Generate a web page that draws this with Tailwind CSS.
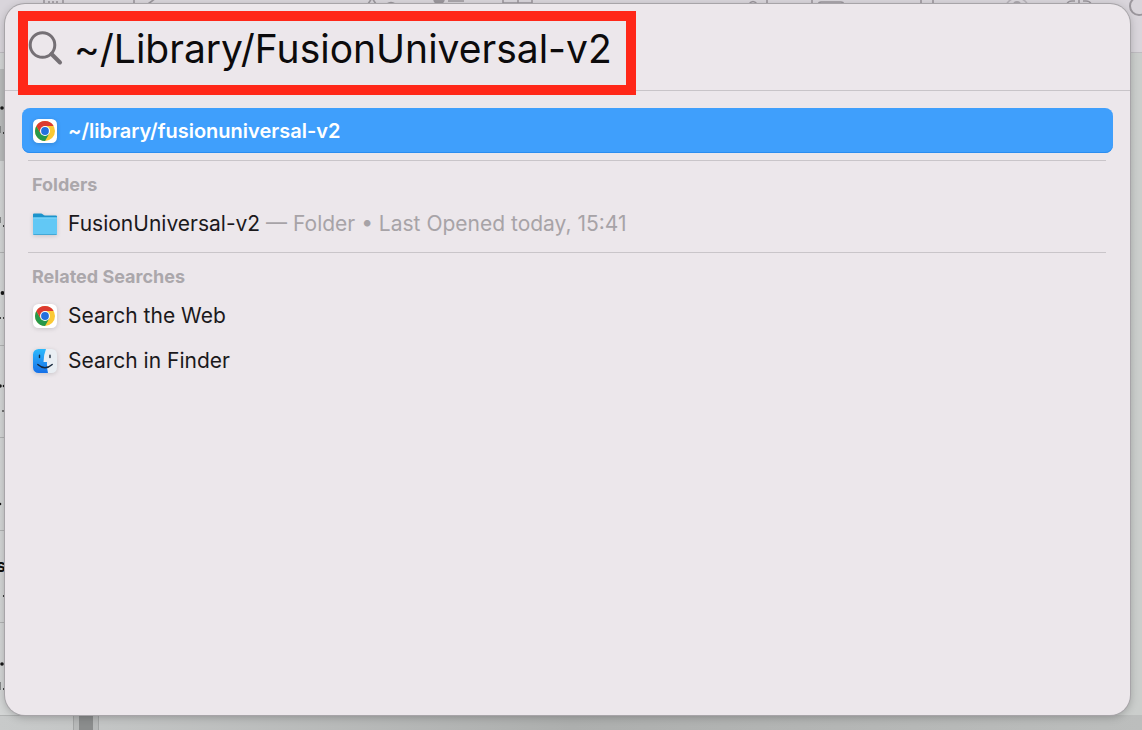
<!DOCTYPE html>
<html lang="en">
<head>
<meta charset="utf-8">
<meta name="viewport" content="width=device-width, initial-scale=1">
<title>Spotlight</title>
<script src="https://cdn.jsdelivr.net/npm/@tailwindcss/browser@4"></script>
</head>
<body class="relative flex h-screen flex-col overflow-hidden bg-[#cccece] font-[Inter,sans-serif] text-[#1b191b]">
<svg class="absolute size-0" aria-hidden="true">
  <defs>
    <symbol id="chrome" viewBox="0 0 24 24">
      <rect width="24" height="24" rx="5.5" fill="#fff"/>
      <circle cx="12" cy="12" r="10" fill="#fbc934"/>
      <path d="M3.34 7A10 10 0 0 0 12 22L16.33 14.5 12 12 7.67 14.5Z" fill="#26984a"/>
      <path d="M3.34 7 7.67 14.5 12 7H20.66A10 10 0 0 0 3.34 7Z" fill="#dc3a30"/>
      <circle cx="12" cy="12" r="5" fill="#fff"/>
      <circle cx="12" cy="12" r="3.9" fill="#2470dc"/>
    </symbol>
  </defs>
</svg>

<!-- Application window behind the search panel -->
<div class="absolute inset-0 flex flex-col" aria-hidden="true">
  <div class="h-[53px] shrink-0 border-b border-[#bfbcc1] bg-[#d9d5db]"></div>
  <div class="relative flex-1 bg-gradient-to-r from-[#d3d5d5] to-[#cbcecc]">
    <div class="absolute left-0 top-4 h-[92px] w-3 bg-[#b9bbbb]"></div>
  </div>
  <div class="flex h-[15px] shrink-0 bg-gradient-to-r from-[#c8caca] via-[#adafae] to-[#bcbebd]">
    <div class="ml-[73px] flex w-[26px] justify-center border-x border-[#a2a4a4] bg-[#b7b9b9]"><div class="w-[14px] bg-[#8b8d8d]"></div></div>
  </div>
</div>
<svg class="absolute left-0 top-0 h-[730px] w-[1142px]" viewBox="0 0 1142 730" fill="none" stroke="#9b979d" stroke-width="1.6" aria-hidden="true">
  <path d="M44-4V4H63V-4M49 1v2M53 1v2M57 1v2M134-4V4M148 4l8-6M368 4l4-6 4 6M387 4q4-3 8 0M448 1h16M503-4V3H532V-4M518-4V3M749 4q4-5 8 0M767-4V4M812-4V4M818 4q1-2 3-2h20q2 0 3 2M921-4V4M933-4V4M1067 4q1-3 5-3h3M1079-4V4M1083 1h3q4 0 5 3"/>
  <circle cx="439" cy="-1" r="5" fill="#9b979d"/>
  <circle cx="1017" cy="10" r="12" stroke="#b8b4ba"/>
  <circle cx="1017" cy="5" r="4" fill="#aca8ae" stroke="none"/>
  <circle cx="1139" cy="6" r="9" stroke-width="2"/>
  <path stroke="#b1b3b3" stroke-width="1" d="M0 252.500h12M0 345.500h12M0 437.500h12M0 530.500h12M0 622.500h12M0 715.500h73"/>
  <g fill="#171717" stroke="none">
    <circle cx="2" cy="108" r="1.800"/><circle cx="4" cy="133" r="1"/><circle cx="4" cy="226" r="1"/><circle cx="2.500" cy="293" r="1.900"/><circle cx="4" cy="318" r="1"/><circle cx="0" cy="318" r="1"/><circle cx="0" cy="386" r="1.800"/><circle cx="4" cy="386" r="1.300"/><circle cx="3" cy="411" r="1" fill="#555"/><circle cx="0" cy="504" r="1.300"/><circle cx="4" cy="596" r="1.100"/><circle cx="2" cy="664" r="1.800"/><circle cx="4" cy="689" r="1"/>
    <path fill="#858787" d="M0 682h1v8H0zM0 217h1v6H0zM0 126h1v7H0z"/>
  </g>
  <text x="-4" y="572" fill="#111" stroke="none" font-size="18" font-weight="700">s</text>
</svg>

<main class="relative mt-1 mr-3 mb-[15px] ml-[5px] flex-1 rounded-[20px] bg-[#ece7eb] shadow-[0_0_0_1px_#a7a4a8,0_2px_8px_rgba(0,0,0,0.25)]">
  <header class="flex h-[87px] items-center border-b border-[#c8c4c8] pt-1 pl-[23px]">
    <svg class="size-9 shrink-0" viewBox="0 0 36 36" fill="none" stroke="#757075" stroke-linecap="round" aria-hidden="true">
      <circle cx="14.500" cy="14" r="12.300" stroke-width="3"/>
      <path d="M23.500 23 32 31.500" stroke-width="4"/>
    </svg>
    <input type="text" aria-label="Spotlight Search" value="~/Library/FusionUniversal-v2" spellcheck="false" class="ml-2.5 h-14 min-w-0 flex-1 bg-transparent text-[39px] text-[#0c0b0c] outline-none">
  </header>
  <div class="absolute left-[13px] top-[7px] h-[84px] w-[618px] border-[10px] border-[#ff2718]" aria-hidden="true"></div>

  <div class="px-[17px] pt-[17px]">
    <button class="flex h-[45px] w-full items-center gap-[11px] rounded-lg bg-[#3f9ffc] px-[11px] text-left text-[20px] font-semibold text-white shadow-[inset_0_-1px_0_#2b8df0]">
      <svg class="size-6 shrink-0 drop-shadow-sm" aria-hidden="true"><use href="#chrome"/></svg>
      <span>~/library/fusionuniversal-v2</span>
    </button>
    <hr class="mt-[7px] mr-[7px] ml-1.5 border-[#c9c5c9]">
    <section>
      <h2 class="flex h-10 items-center px-2.5 pt-1.5 text-[18px] font-bold text-[#aba7ab]">Folders</h2>
      <button class="flex h-[45px] w-full items-center gap-[11px] px-[11px] text-left text-[21px]">
        <svg class="size-6 shrink-0 drop-shadow-sm" viewBox="0 0 24 24" aria-hidden="true">
          <path d="M0 2.500Q0 1.500 1 1.500H8q1 0 2 1t2 1H23q1 0 1 1V9H0Z" fill="#1c93cb"/>
          <rect y="5.500" width="24" height="17.500" rx="1" fill="#62c8f5"/>
          <path d="M0 6H24" stroke="#83d8fb"/>
          <path d="M.5 22.500h23" stroke="#43a8d6"/>
        </svg>
        <span>FusionUniversal-v2 <span class="text-[#a7a3a7]">— Folder • Last Opened today, 15:41</span></span>
      </button>
    </section>
    <hr class="mt-1.5 mr-[7px] ml-1.5 border-[#c9c5c9]">
    <section>
      <h2 class="flex h-10 items-center px-2.5 pt-1.5 text-[18px] font-bold text-[#aba7ab]">Related Searches</h2>
      <button class="flex h-[45px] w-full items-center gap-[11px] px-[11px] text-left text-[21px]">
        <svg class="size-6 shrink-0 drop-shadow-sm" aria-hidden="true"><use href="#chrome"/></svg>
        <span>Search the Web</span>
      </button>
      <button class="flex h-[45px] w-full items-center gap-[11px] px-[11px] text-left text-[21px]">
        <svg class="size-6 shrink-0 drop-shadow-sm" viewBox="0 0 24 24" aria-hidden="true">
          <defs><linearGradient id="blue" x2="0" y2="1"><stop stop-color="#2cb9fc"/><stop offset="1" stop-color="#1670e8"/></linearGradient></defs>
          <rect width="24" height="24" rx="5.500" fill="#e9eef3"/>
          <path d="M5.500 0H13Q10.500 6 10.500 13H14q-.2 6 1 11H5.500A5.500 5.500 0 0 1 0 18.500V5.500A5.500 5.500 0 0 1 5.500 0Z" fill="url(#blue)"/>
          <path d="M6.500 6.200v2.300M17 6.200v2.300M4.800 15.500q7.200 6.500 14.400 0" fill="none" stroke="#16283c" stroke-width="1.400" stroke-linecap="round"/>
        </svg>
        <span>Search in Finder</span>
      </button>
    </section>
  </div>
</main>
</body>
</html>
